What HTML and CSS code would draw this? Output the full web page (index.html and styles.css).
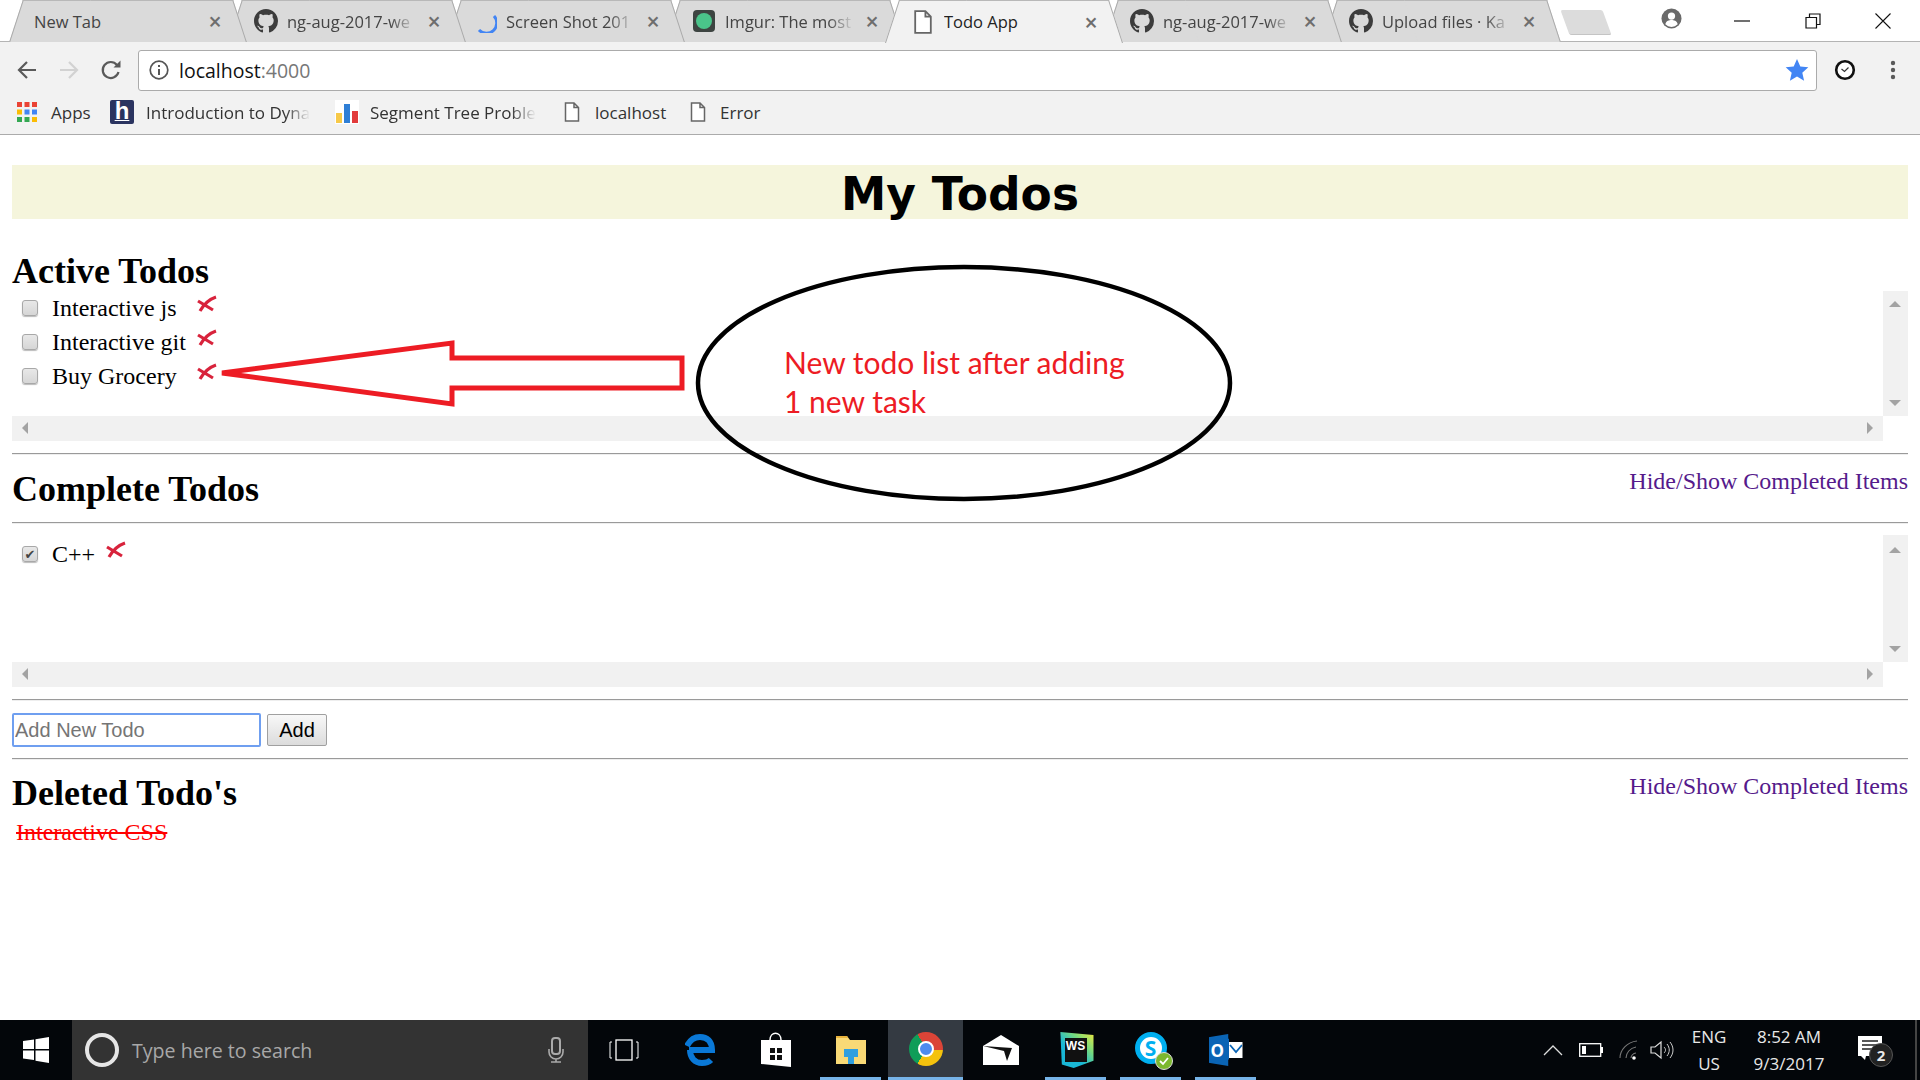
FILE: index.html
```html
<!DOCTYPE html>
<html lang="en">
<head>
    <meta charset="UTF-8">
    <title>Todo App</title>
    <link rel="stylesheet" href="styles.css">
</head>
<body>
    <svg class="defs" width="0" height="0">
        <symbol id="gh" viewBox="0 0 16 16"><path d="M8 0C3.58 0 0 3.58 0 8c0 3.54 2.29 6.53 5.47 7.59.4.07.55-.17.55-.38 0-.19-.01-.82-.01-1.49-2.01.37-2.53-.49-2.69-.94-.09-.23-.48-.94-.82-1.13-.28-.15-.68-.52-.01-.53.63-.01 1.08.58 1.23.82.72 1.21 1.87.87 2.33.66.07-.52.28-.87.51-1.07-1.78-.2-3.64-.89-3.64-3.95 0-.87.31-1.59.82-2.15-.08-.2-.36-1.02.08-2.12 0 0 .67-.21 2.2.82.64-.18 1.32-.27 2-.27.68 0 1.36.09 2 .27 1.53-1.04 2.2-.82 2.2-.82.44 1.1.16 1.92.08 2.12.51.56.82 1.27.82 2.15 0 3.07-1.87 3.75-3.65 3.95.29.25.54.73.54 1.48 0 1.07-.01 1.93-.01 2.2 0 .21.15.46.55.38A8.013 8.013 0 0016 8c0-4.42-3.58-8-8-8z" fill="#3c3c3c"/></symbol>
        <symbol id="doc" viewBox="0 0 16 20"><path d="M1.5 1h8.500l4.500 4.500v13.500h-13z M10 1v4.500h4.500" fill="#fff" stroke="#666" stroke-width="1.500"/></symbol>
        <symbol id="cross" viewBox="0 0 20 20"><path d="M1 6l15 9M19 2C13 4 7 9 3 16" fill="none" stroke="#d8233c" stroke-width="3.200"/></symbol>
    </svg>

    <header class="chrome">
        <div class="tabstrip">
            <div class="tab tab-1"><span class="tab-label">New Tab</span><span class="tab-x">×</span></div>
            <div class="tab tab-2"><svg class="tab-icon"><use href="#gh"/></svg><span class="tab-label">ng-aug-2017-we</span><span class="tab-x">×</span></div>
            <div class="tab tab-3">
                <svg class="tab-icon" viewBox="0 0 24 24"><path d="M21 7a10 10 0 0 1-15 14" fill="none" stroke="#4285f4" stroke-width="3"/></svg>
                <span class="tab-label">Screen Shot 201</span><span class="tab-x">×</span>
            </div>
            <div class="tab tab-4">
                <svg class="tab-icon" viewBox="0 0 24 24"><rect x="1" y="1" width="22" height="22" rx="4" fill="#3d4441"/><circle cx="12" cy="12" r="8" fill="#4ac48a"/></svg>
                <span class="tab-label">Imgur: The most</span><span class="tab-x">×</span>
            </div>
            <div class="tab tab-active"><svg class="tab-icon"><use href="#doc"/></svg><span class="tab-label">Todo App</span><span class="tab-x">×</span></div>
            <div class="tab tab-6"><svg class="tab-icon"><use href="#gh"/></svg><span class="tab-label">ng-aug-2017-we</span><span class="tab-x">×</span></div>
            <div class="tab tab-7"><svg class="tab-icon"><use href="#gh"/></svg><span class="tab-label">Upload files · Ka</span><span class="tab-x">×</span></div>
            <div class="new-tab"></div>
            <div class="window-btns">
                <svg class="profile" width="21" height="21" viewBox="0 0 22 22"><circle cx="11" cy="11" r="10.500" fill="#6a6a6a"/><circle cx="11" cy="8.500" r="3.800" fill="#fff"/><path d="M4.500 17c1-3.500 4-4.300 6.500-4.300s5.500.8 6.500 4.300a9 9 0 0 1-13 0z" fill="#fff"/></svg>
                <svg class="win-btn win-min" width="16" height="16" viewBox="0 0 16 16"><path d="M0 8h16" stroke="#111" stroke-width="1.200"/></svg>
                <svg class="win-btn win-max" width="16" height="16" viewBox="0 0 16 16"><path d="M1 4.500h10.500v10.500H1zM4.500 4.500V1H15v10.500h-3.500" fill="none" stroke="#111" stroke-width="1.200"/></svg>
                <svg class="win-btn" width="16" height="16" viewBox="0 0 16 16"><path d="M.5.5l15 15M15.500.5l-15 15" stroke="#111" stroke-width="1.100"/></svg>
            </div>
        </div>
        <div class="toolbar">
            <svg class="nav" width="22" height="22" viewBox="0 0 22 22"><path d="M20 11H4M11 3l-8 8 8 8" fill="none" stroke="#5a5a5a" stroke-width="2.200"/></svg>
            <svg class="nav" width="22" height="22" viewBox="0 0 22 22"><path d="M2 11h16M11 3l8 8-8 8" fill="none" stroke="#d2d2d2" stroke-width="2.200"/></svg>
            <svg class="nav" width="22" height="22" viewBox="0 0 22 22"><path d="M18.500 13a8 8 0 1 1-1.500-7" fill="none" stroke="#5a5a5a" stroke-width="2.200"/><path d="M20.500 1.500v7h-7z" fill="#5a5a5a"/></svg>
            <div class="omnibox">
                <svg width="20" height="20" viewBox="0 0 20 20"><circle cx="10" cy="10" r="8.800" fill="none" stroke="#555" stroke-width="1.700"/><path d="M10 9v6M10 5v2" stroke="#555" stroke-width="2"/></svg>
                <span class="url">localhost<span class="url-port">:4000</span></span>
                <svg class="star" width="24" height="24" viewBox="0 0 24 24"><path d="M12 1l3.300 7.500 8 .8-6 5.400 1.800 8L12 18.500l-7.100 4.200 1.800-8-6-5.400 8-.8z" fill="#4285f4"/></svg>
            </div>
            <svg class="ext" width="22" height="22" viewBox="0 0 22 22"><circle cx="11" cy="11" r="8.800" fill="#fff" stroke="#111" stroke-width="2.600"/><path d="M7.500 10l3 2.500 4-4" fill="none" stroke="#333" stroke-width="1.200"/></svg>
            <svg class="menu" width="6" height="22" viewBox="0 0 6 22"><circle cx="3" cy="4" r="2.200" fill="#5a5a5a"/><circle cx="3" cy="11" r="2.200" fill="#5a5a5a"/><circle cx="3" cy="18" r="2.200" fill="#5a5a5a"/></svg>
        </div>
        <nav class="bookmarks">
            <div class="bm bm-apps">
                <svg width="20" height="20" viewBox="0 0 20 20">
                    <path d="M0 0h5v5H0z" fill="#ea4335"/><path d="M7.500 0h5v5h-5z" fill="#ea4335"/><path d="M15 0h5v5h-5z" fill="#ea4335"/>
                    <path d="M0 7.500h5v5H0z" fill="#fbbc05"/><path d="M7.500 7.500h5v5h-5z" fill="#4285f4"/><path d="M15 7.500h5v5h-5z" fill="#4285f4"/>
                    <path d="M0 15h5v5H0z" fill="#34a853"/><path d="M7.500 15h5v5h-5z" fill="#34a853"/><path d="M15 15h5v5h-5z" fill="#fbbc05"/>
                </svg>
                <span>Apps</span>
            </div>
            <div class="bm bm-h">
                <span class="h-logo">h</span>
                <span class="bm-fade bm-fade-h">Introduction to Dyna</span>
            </div>
            <div class="bm bm-seg">
                <svg width="24" height="24" viewBox="0 0 24 24"><rect width="24" height="24" fill="#fff"/><path d="M1 13h6v10H1z" fill="#f7c948"/><path d="M9 4h6v19H9z" fill="#2f7fd6"/><path d="M17 11h6v12h-6z" fill="#e23b3b"/></svg>
                <span class="bm-fade bm-fade-seg">Segment Tree Proble</span>
            </div>
            <div class="bm bm-local"><svg width="16" height="20"><use href="#doc"/></svg><span>localhost</span></div>
            <div class="bm"><svg width="16" height="20"><use href="#doc"/></svg><span>Error</span></div>
        </nav>
    </header>

    <main class="page">
        <h1 class="banner">My Todos</h1>

        <h2 class="title-active">Active Todos</h2>
        <div class="scrollbox box-active">
            <table class="todos">
                <tr><td class="cb"><input type="checkbox"></td><td>Interactive js</td><td class="del"><svg width="20" height="20"><use href="#cross"/></svg></td></tr>
                <tr><td class="cb"><input type="checkbox"></td><td>Interactive git</td><td class="del"><svg width="20" height="20"><use href="#cross"/></svg></td></tr>
                <tr><td class="cb"><input type="checkbox"></td><td>Buy Grocery</td><td class="del"><svg width="20" height="20"><use href="#cross"/></svg></td></tr>
            </table>
            <div class="vbar"><i class="arr arr-up"></i><i class="arr arr-down"></i></div>
            <div class="hbar"><i class="arr arr-left"></i><i class="arr arr-right"></i></div>
        </div>
        <hr>

        <div class="section-head head-complete">
            <h2>Complete Todos</h2>
            <a href="#">Hide/Show Completed Items</a>
        </div>
        <hr>
        <div class="scrollbox box-complete">
            <table class="todos">
                <tr><td class="cb"><input type="checkbox" checked></td><td>C++</td><td class="del"><svg width="20" height="20"><use href="#cross"/></svg></td></tr>
            </table>
            <div class="vbar"><i class="arr arr-up"></i><i class="arr arr-down"></i></div>
            <div class="hbar"><i class="arr arr-left"></i><i class="arr arr-right"></i></div>
        </div>
        <hr>

        <form class="add-form" onsubmit="event.preventDefault();">
            <input class="add-input" type="text" placeholder="Add New Todo">
            <button class="add-btn" type="submit">Add</button>
        </form>
        <hr>

        <div class="section-head head-deleted">
            <h2>Deleted Todo's</h2>
            <a href="#">Hide/Show Completed Items</a>
        </div>
        <div class="deleted-item">Interactive CSS</div>

        <!-- annotation drawn on top of the screenshot -->
        <svg class="markup" width="1920" height="885" viewBox="0 135 1920 885">
            <ellipse cx="964" cy="383" rx="266" ry="116" fill="none" stroke="#000" stroke-width="4.500"/>
            <path d="M222 373L452 343V358H682V388H452V404z" fill="none" stroke="#ed1c24" stroke-width="5"/>
        </svg>
        <div class="markup-text">New todo list after adding<br>1 new task</div>
    </main>

    <footer class="taskbar">
        <div class="start">
            <svg width="26" height="26" viewBox="0 0 26 26"><path d="M0 4l11-1.500V12H0zM12.500 2.300L26 0v12H12.500zM0 13.500h11V23L0 21.500zM12.500 13.500H26V26l-13.500-2.200z" fill="#fff"/></svg>
        </div>
        <div class="search">
            <span class="cortana"></span>
            <span class="search-text">Type here to search</span>
            <svg class="mic" width="16" height="26" viewBox="0 0 16 26"><rect x="4" y="1" width="8" height="16" rx="3" fill="none" stroke="#aaa" stroke-width="2"/><path d="M1 12v3a7 7 0 0 0 14 0v-3M8 22v3M3 25h10" fill="none" stroke="#aaa" stroke-width="1.600"/></svg>
        </div>
        <div class="tb-btn tb-taskview">
            <svg width="30" height="22" viewBox="0 0 30 22"><rect x="7" y="1" width="16" height="20" fill="none" stroke="#fff" stroke-width="1.300"/><path d="M3 3H1v16h2M27 3h2v16h-2" fill="none" stroke="#fff" stroke-width="1"/></svg>
        </div>
        <div class="tb-btn">
            <svg width="32" height="34" viewBox="0 0 32 34"><path d="M4 17H27C27 8 22 4 15 4 9 4 5 7 2 13M5 17c0 8 5 13 12 13 4 0 7-1 9-3" fill="none" stroke="#0a78d7" stroke-width="6"/></svg>
        </div>
        <div class="tb-btn">
            <svg width="32" height="36" viewBox="0 0 32 36"><path d="M1 8h30v27L1 32z" fill="#fff"/><path d="M10 8c0-9 11-9 11 0" fill="none" stroke="#fff" stroke-width="1.500"/><path d="M10 16h5v5h-5zM17 16h5v5h-5zM10 23h5v5h-5zM17 23h5v5h-5z" fill="#111"/></svg>
        </div>
        <div class="tb-btn tb-open">
            <svg width="32" height="28" viewBox="0 0 32 28"><path d="M1 0h11l3 4h16v24H1z" fill="#f9d976"/><path d="M1 0h11l1 2H1z" fill="#e9b33c"/><path d="M9 13h14v8h-4v7h-6v-7H9z" fill="#2f9fe0"/></svg>
        </div>
        <div class="tb-btn tb-chrome"><span class="chrome-logo"></span></div>
        <div class="tb-btn">
            <svg width="36" height="30" viewBox="0 0 36 30"><path d="M0 11L18 0l18 11v19H0z" fill="#fff"/><path d="M0 11l21 5 3 10 5-13z" fill="#111"/></svg>
        </div>
        <div class="tb-btn tb-open">
            <div class="ws-logo"><span>WS</span></div>
        </div>
        <div class="tb-btn tb-open">
            <div class="skype"><span class="skype-s">S</span><svg class="skype-ok" width="18" height="18" viewBox="0 0 18 18"><circle cx="9" cy="9" r="8.500" fill="#7cb82f" stroke="#ddd"/><path d="M5 9l3 3 5-6" fill="none" stroke="#fff" stroke-width="1.800"/></svg></div>
        </div>
        <div class="tb-btn tb-open">
            <div class="outlook"><span class="outlook-o">O</span><svg width="14" height="16" viewBox="0 0 14 16"><rect width="14" height="16" fill="#fff"/><path d="M1 3l6 7 6-7" fill="none" stroke="#0a64b5" stroke-width="1.800"/></svg></div>
        </div>

        <div class="tray">
            <svg class="tray-chev" width="20" height="11" viewBox="0 0 20 11"><path d="M1 10l9-9 9 9" fill="none" stroke="#ddd" stroke-width="1.300"/></svg>
            <svg class="tray-batt" width="24" height="14" viewBox="0 0 24 14"><rect x=".7" y=".7" width="21" height="12.600" fill="none" stroke="#fff" stroke-width="1.300"/><rect x="3" y="3" width="4" height="8" fill="#fff"/><rect x="22" y="4" width="2" height="6" fill="#fff"/></svg>
            <svg class="tray-wifi" width="22" height="20" viewBox="0 0 22 20"><path d="M1 18C1 10 8 2 18 1M7 18c0-5 4-10 10-11M12 18c0-2 2-5 5-5" fill="none" stroke="#777" stroke-width="1.100"/><circle cx="15" cy="18" r="1.800" fill="#fff"/></svg>
            <svg class="tray-vol" width="24" height="20" viewBox="0 0 24 20"><path d="M1 7h4l6-5v16l-6-5H1z" fill="none" stroke="#ddd" stroke-width="1.200"/><path d="M14 7c2 2 2 4 0 6M17 4c3 4 3 8 0 12M20 2c4 5 4 11 0 16" fill="none" stroke="#ccc" stroke-width="1"/></svg>
            <div class="lang"><span>ENG</span><span>US</span></div>
            <div class="clock"><span>8:52 AM</span><span>9/3/2017</span></div>
            <div class="notif">
                <svg width="26" height="30" viewBox="0 0 26 30"><path d="M1 1h24v20H9l-1 4-4-4H1z" fill="#fff"/><path d="M5 6h16M5 10h16M5 14h16" stroke="#222" stroke-width="1.300"/></svg>
                <span class="notif-count">2</span>
            </div>
            <div class="show-desktop"></div>
        </div>
    </footer>
</body>
</html>
```

FILE: styles.css
```css
html, body {
    height: 100%;
}
body {
    margin: 0;
    height: 1080px;
    display: flex;
    flex-direction: column;
    overflow: hidden;
    background-color: #fff;
    font-family: "Liberation Serif", serif;
    color: #000;
}
.defs {
    position: absolute;
}

/* browser chrome */
.chrome {
    height: 135px;
    flex: none;
    font-family: "Open Sans", sans-serif;
}
.tabstrip {
    height: 42px;
    display: flex;
    padding-left: 9px;
    box-sizing: border-box;
    border-bottom: 1px solid #b4b4b4;
}
.tab {
    position: relative;
    width: 238px;
    height: 42px;
    margin-right: -19px;
    padding: 0 25px 0 26px;
    box-sizing: border-box;
    flex: none;
    display: flex;
    align-items: center;
    font-size: 16.500px;
    color: #444;
}
.tab::before,
.tab::after {
    content: "";
    position: absolute;
    z-index: -1;
    top: 0;
    bottom: 0;
    width: 60%;
    background-color: #dadada;
    border-top: 1px solid #b8b8b8;
    box-sizing: border-box;
}
.tab::before {
    left: 7px;
    transform: skewX(-18deg);
    border-left: 1px solid #a9a9a9;
}
.tab::after {
    right: 7px;
    transform: skewX(18deg);
    border-right: 1px solid #a9a9a9;
}
.tab-1 { z-index: 7; padding-left: 25px; }
.tab-2 { z-index: 6; }
.tab-3 { z-index: 5; }
.tab-4 { z-index: 4; }
.tab-active { z-index: 8; color: #222; height: 43px; }
.tab-6 { z-index: 2; }
.tab-7 { z-index: 1; }
.tab-active::before,
.tab-active::after {
    background-color: #f2f2f2;
}
.tab-icon {
    width: 24px;
    height: 24px;
    margin-right: 9px;
    flex: none;
}
.tab-label {
    flex: 1;
    white-space: nowrap;
    overflow: hidden;
    -webkit-mask-image: linear-gradient(to right, #000 78%, transparent 98%);
    mask-image: linear-gradient(to right, #000 78%, transparent 98%);
}
.tab-1 .tab-label,
.tab-active .tab-label {
    -webkit-mask-image: none;
    mask-image: none;
}
.tab-x {
    margin-left: 8px;
    width: 14px;
    font-size: 23px;
    font-weight: 600;
    line-height: 20px;
    text-align: center;
    color: #6e6e6e;
}
.new-tab {
    width: 42px;
    height: 24px;
    margin: 10px 0 0 23px;
    flex: none;
    background-color: #dcdcdc;
    border-bottom: 1px solid #c4c4c4;
    transform: skewX(20deg);
    border-radius: 2px;
}
.window-btns {
    display: flex;
    align-items: flex-start;
    margin-left: auto;
}
.profile {
    margin: 8px 52px 0 0;
}
.win-btn {
    margin: 13px 52px 0 0;
}
.win-min {
    margin-right: 55px;
}
.win-max {
    margin-right: 54px;
}
.win-btn:last-child {
    margin-right: 29px;
}
.toolbar {
    height: 50px;
    display: flex;
    align-items: center;
    box-sizing: border-box;
    padding: 6px 0 0 16px;
    background-color: #f2f2f2;
}
.nav {
    margin-right: 20px;
    flex: none;
}
.omnibox {
    width: 1679px;
    height: 41px;
    margin-left: -4px;
    padding: 0 7px 0 10px;
    box-sizing: border-box;
    display: flex;
    align-items: center;
    background-color: #fff;
    border: 1px solid #ababab;
    border-radius: 3px;
    flex: none;
}
.url {
    margin-left: 10px;
    font-size: 19.500px;
    color: #111;
}
.url-port {
    color: #777;
}
.star {
    margin-left: auto;
}
.ext {
    margin-left: 17px;
    flex: none;
}
.menu {
    margin-left: 34px;
    flex: none;
}
.bookmarks {
    height: 43px;
    box-sizing: border-box;
    padding: 0 0 2px 17px;
    display: flex;
    align-items: center;
    background-color: #f2f2f2;
    border-bottom: 1px solid #ababab;
    font-size: 17px;
    color: #333;
}
.bm {
    display: flex;
    align-items: center;
    gap: 14px;
    flex: none;
}
.bm-apps {
    width: 93px;
}
.bm-h {
    width: 225px;
    gap: 12px;
}
.bm-seg {
    width: 229px;
    gap: 11px;
}
.bm-local {
    width: 126px;
    gap: 15px;
}
.bm-fade {
    white-space: nowrap;
    -webkit-mask-image: linear-gradient(to right, #000 85%, transparent 100%);
    mask-image: linear-gradient(to right, #000 85%, transparent 100%);
}
.h-logo {
    width: 24px;
    height: 24px;
    background-color: #2b3460;
    border-radius: 2px;
    color: #fff;
    font: bold 24px/22px "Liberation Sans", sans-serif;
    text-align: center;
    flex: none;
    text-decoration: underline;
    text-decoration-thickness: 1px;
}

/* the page */
.page {
    position: relative;
    flex: 1;
    padding: 30px 12px 0;
}
.banner {
    margin: 0;
    height: 54px;
    background-color: #f5f5dc;
    font: bold 45.500px/60px "DejaVu Sans", sans-serif;
    text-align: center;
}
h2 {
    margin: 0;
    font-size: 36px;
    line-height: 37px;
}
.title-active {
    margin-top: 34px;
    height: 36px;
}
hr {
    margin: 0;
    height: 0;
    border: 0;
    border-top: 1px solid #9a9a9a;
    border-bottom: 1px solid #eee;
}
.scrollbox {
    display: grid;
    grid-template-columns: 1fr 25px;
    grid-template-rows: 125px 25px;
    margin-bottom: 12px;
}
.box-active {
    margin-top: 2px;
}
.box-complete {
    margin-top: 11px;
    grid-template-rows: 127px 25px;
}
.box-complete .todos {
    margin-top: 2px;
}
.vbar,
.hbar {
    position: relative;
    background-color: #f1f1f1;
}
.arr {
    position: absolute;
    width: 0;
    height: 0;
    border: 6px solid transparent;
}
.arr-up {
    left: 6px;
    top: 4px;
    border-bottom-color: #a3a3a3;
}
.arr-down {
    left: 6px;
    bottom: 4px;
    border-top-color: #a3a3a3;
}
.box-complete .arr-up {
    top: 6px;
}
.arr-left {
    left: 4px;
    top: 6px;
    border-right-color: #a3a3a3;
}
.arr-right {
    right: 4px;
    top: 6px;
    border-left-color: #a3a3a3;
}
.todos {
    border-collapse: collapse;
    grid-column: 1;
    grid-row: 1;
    align-self: start;
    justify-self: start;
    font-size: 24px;
}
.todos td {
    padding: 0;
    height: 34px;
    vertical-align: middle;
}
.todos .cb {
    width: 40px;
    padding-left: 10px;
    box-sizing: border-box;
}
.todos .del {
    padding-left: 11px;
}
.del svg {
    display: block;
    margin-top: -7px;
}
.todos input {
    appearance: none;
    -webkit-appearance: none;
    display: block;
    width: 16px;
    height: 16px;
    margin: 0;
    border: 1px solid #a8a8a8;
    border-radius: 3px;
    background: linear-gradient(#e8e8e8, #d6d6d6);
    box-shadow: 0 1px 1px #bbb;
}
.todos input:checked::before {
    content: "✔";
    display: block;
    font: 13px/15px "DejaVu Sans", sans-serif;
    color: #444;
    text-align: center;
}
.section-head {
    display: flex;
    justify-content: space-between;
    align-items: flex-start;
}
.section-head a {
    font-size: 24px;
    color: #551a8b;
    text-decoration: none;
}
.head-complete {
    height: 67px;
    padding-top: 13px;
    box-sizing: border-box;
}
.head-complete h2 {
    margin-top: 3px;
}
.head-deleted {
    padding-top: 13px;
    height: 54px;
    box-sizing: border-box;
}
.head-deleted h2 {
    margin-top: 2px;
}
.add-form {
    display: flex;
    gap: 6px;
    align-items: center;
    height: 34px;
    margin: 12px 0 11px;
}
.add-input {
    width: 249px;
    height: 34px;
    padding: 0 1px;
    box-sizing: border-box;
    border: 2px solid #6f9ff0;
    border-radius: 2px;
    outline: none;
    font: 20px "Liberation Sans", sans-serif;
}
.add-input::placeholder {
    color: #757575;
}
.add-btn {
    width: 60px;
    height: 32px;
    padding: 0;
    border: 1px solid #a0a0a0;
    border-radius: 2px;
    background: linear-gradient(#f8f8f8, #dcdcdc);
    font: 20px "Liberation Sans", sans-serif;
    color: #000;
}
.deleted-item {
    margin-top: 4px;
    padding-left: 4px;
    font-size: 24px;
    line-height: 28px;
    color: #f00;
    text-decoration: line-through;
}
.markup {
    position: absolute;
    left: 0;
    top: 0;
    pointer-events: none;
}
.markup-text {
    position: absolute;
    left: 784px;
    top: 208px;
    font: 30px/38.500px "Lato", sans-serif;
    color: #ed1c24;
}

/* windows taskbar */
.taskbar {
    height: 60px;
    flex: none;
    display: flex;
    align-items: stretch;
    background-color: #03060a;
    font-family: "Open Sans", sans-serif;
    color: #e8e8e8;
}
.start {
    width: 72px;
    display: flex;
    align-items: center;
    justify-content: center;
    flex: none;
}
.search {
    width: 516px;
    flex: none;
    display: flex;
    align-items: center;
    background-color: #333;
    box-sizing: border-box;
    padding: 0 24px 0 13px;
}
.cortana {
    width: 34px;
    height: 34px;
    box-sizing: border-box;
    border-radius: 50%;
    border: 4px solid #e6e6e6;
}
.search-text {
    margin-left: 13px;
    font-size: 19.600px;
    color: #a8a8a8;
}
.mic {
    margin-left: auto;
}
.tb-btn {
    position: relative;
    width: 75px;
    flex: none;
    display: flex;
    align-items: center;
    justify-content: center;
    box-sizing: border-box;
}
.tb-taskview {
    padding-right: 3px;
}
.tb-open::after {
    content: "";
    position: absolute;
    left: 7px;
    right: 7px;
    bottom: 0;
    height: 3px;
    background-color: #76b3e8;
}
.tb-chrome {
    background-color: #343a42;
    border-bottom: 3px solid #76b3e8;
}
.chrome-logo {
    position: relative;
    width: 34px;
    height: 34px;
    border-radius: 50%;
    background: conic-gradient(from -30deg, #db4437 0 125deg, #f4c20d 125deg 240deg, #0f9d58 240deg 360deg);
}
.chrome-logo::after {
    content: "";
    position: absolute;
    left: 9px;
    top: 9px;
    width: 16px;
    height: 16px;
    box-sizing: border-box;
    border-radius: 50%;
    background-color: #4e8bef;
    border: 2px solid #fff;
}
.ws-logo {
    width: 36px;
    height: 36px;
    display: flex;
    align-items: center;
    justify-content: center;
    background: linear-gradient(45deg, #19b7d6 40%, #7bdc7a 70%, #f5e83c);
    clip-path: polygon(8% 0, 100% 8%, 100% 80%, 45% 100%, 12% 90%);
}
.ws-logo span {
    width: 22px;
    height: 24px;
    background-color: #111;
    color: #fff;
    font: bold 12px/16px "Liberation Sans", sans-serif;
    text-align: center;
}
.skype {
    position: relative;
    width: 32px;
    height: 32px;
    border-radius: 50%;
    background-color: #fff;
    border: 5px solid #00aff0;
    box-sizing: border-box;
    display: flex;
    align-items: center;
    justify-content: center;
    margin-top: -4px;
}
.skype-s {
    font: bold 21px/21px "Open Sans", sans-serif;
    color: #00aff0;
}
.skype-ok {
    position: absolute;
    right: -11px;
    bottom: -11px;
}
.outlook {
    width: 34px;
    height: 32px;
    display: flex;
    align-items: center;
    background: linear-gradient(to right, #0a64b5 58%, transparent 58%);
    clip-path: polygon(0 10%, 58% 0, 58% 15%, 100% 15%, 100% 80%, 58% 80%, 58% 100%, 0 90%);
}
.outlook-o {
    width: 18px;
    padding-left: 2px;
    font: bold 17px "Open Sans", sans-serif;
    color: #fff;
}
.tray {
    margin-left: auto;
    display: flex;
    align-items: center;
    flex: none;
}
.tray-chev { margin-right: 16px; }
.tray-batt { margin-right: 16px; }
.tray-wifi { margin-right: 9px; }
.tray-vol { margin-right: 6px; }
.lang,
.clock {
    display: flex;
    flex-direction: column;
    align-items: center;
    gap: 5px;
    font-size: 17px;
    line-height: 22px;
}
.lang {
    width: 58px;
}
.clock {
    width: 102px;
}
.notif {
    position: relative;
    width: 60px;
    display: flex;
    justify-content: center;
}
.notif-count {
    position: absolute;
    left: 29px;
    top: 8px;
    width: 24px;
    height: 24px;
    border-radius: 50%;
    background-color: #222;
    border: 1px solid #555;
    box-sizing: border-box;
    font-size: 15px;
    font-weight: bold;
    line-height: 22px;
    text-align: center;
}
.show-desktop {
    width: 17px;
    height: 60px;
    border-right: 2px solid #444;
    margin-right: 3px;
    box-sizing: border-box;
}
```
